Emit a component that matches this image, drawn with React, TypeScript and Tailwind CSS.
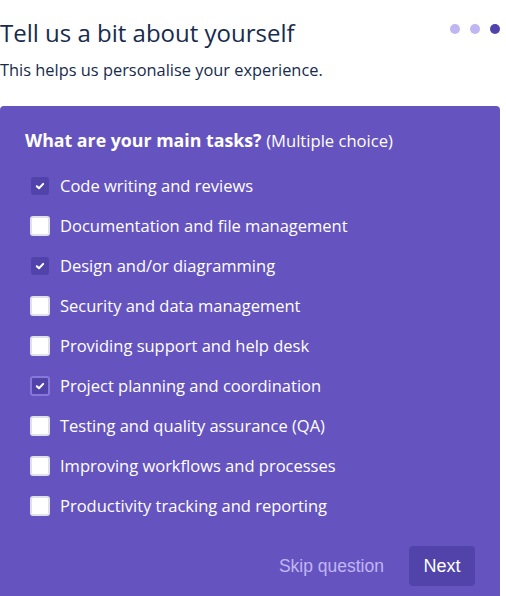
import { useState } from 'react';

const TASKS = [
  { label: 'Code writing and reviews', checked: true },
  { label: 'Documentation and file management', checked: false },
  { label: 'Design and/or diagramming', checked: true },
  { label: 'Security and data management', checked: false },
  { label: 'Providing support and help desk', checked: false },
  { label: 'Project planning and coordination', checked: true, focused: true },
  { label: 'Testing and quality assurance (QA)', checked: false },
  { label: 'Improving workflows and processes', checked: false },
  { label: 'Productivity tracking and reporting', checked: false },
];

function Check() {
  return (
    <svg width="10" height="10" viewBox="0 0 10 10" fill="none">
      <path d="M1.8 5.2 L4 7.3 L8.2 2.9" stroke="white" strokeWidth="2" strokeLinecap="round" strokeLinejoin="round" />
    </svg>
  );
}

function Checkbox({ checked, focused }: { checked: boolean; focused?: boolean }) {
  if (!checked) {
    return <span className="w-5 h-5 rounded-[3px] bg-white border-2 border-[#dfe1e6] shrink-0" />;
  }
  if (focused) {
    return (
      <span className="w-5 h-5 rounded-[3px] bg-[#5243aa] border-2 border-[#8777d9] shrink-0 flex items-center justify-center">
        <Check />
      </span>
    );
  }
  return (
    <span className="w-5 h-5 shrink-0 flex items-center justify-center">
      <span className="w-[18px] h-[18px] rounded-[3px] bg-[#5243aa] flex items-center justify-center">
        <Check />
      </span>
    </span>
  );
}

export default function App() {
  const [tasks] = useState(TASKS);

  return (
    <div className="w-[500px] font-['Open_Sans',sans-serif] text-[#172b4d]">
      {/* Header */}
      <div className="flex justify-between items-start pt-[17px]">
        <h1 className="text-[24px] leading-[32px] font-normal">Tell us a bit about yourself</h1>
        <div className="flex gap-[10px] mt-[7px]">
          <span className="w-[10px] h-[10px] rounded-full bg-[#c0b6f2]" />
          <span className="w-[10px] h-[10px] rounded-full bg-[#c0b6f2]" />
          <span className="w-[10px] h-[10px] rounded-full bg-[#5243aa]" />
        </div>
      </div>
      <p className="mt-[9px] text-[16.4px] leading-[24px]">This helps us personalise your experience.</p>

      {/* Question card */}
      <div className="mt-[24px] bg-[#6554c0] rounded-[4px] px-[25px] pt-[23px] pb-[24px] text-white">
        <h2 className="text-[17.75px] leading-[22px]">
          <span className="font-bold">What are your main tasks?</span>{' '}
          <span className="text-[16.6px]">(Multiple choice)</span>
        </h2>

        <ul className="mt-[14px] pl-[5px]">
          {tasks.map((t) => (
            <li key={t.label} className="h-10 flex items-center gap-[10px]">
              <Checkbox checked={t.checked} focused={t.focused} />
              <span className="text-[16.5px] leading-[24px]">{t.label}</span>
            </li>
          ))}
        </ul>

        <div className="mt-5 flex justify-end items-center gap-[10px] font-['Liberation_Sans',Arial,sans-serif]">
          <button className="h-10 px-[15px] text-[17.5px] text-[#c0b6f2]">Skip question</button>
          <button className="h-10 px-[14.5px] text-[18px] rounded-[4px] bg-[#5243aa] text-white">Next</button>
        </div>
      </div>
    </div>
  );
}
